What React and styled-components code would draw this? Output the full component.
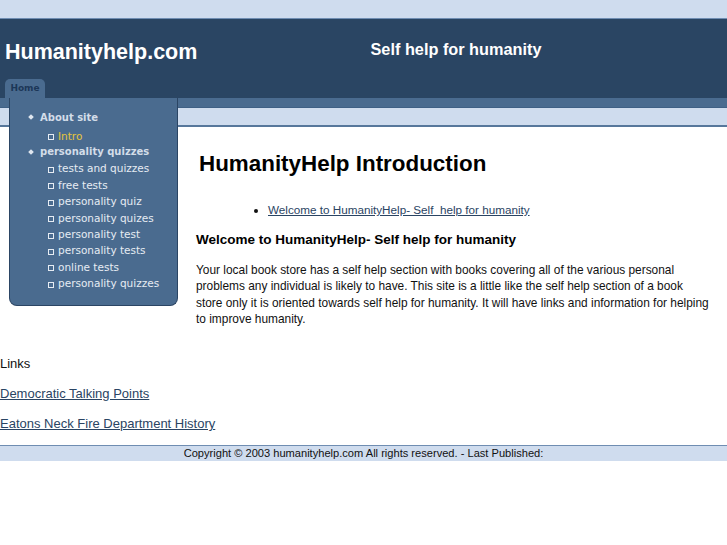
import React from "react";
import styled, { createGlobalStyle } from "styled-components";

const Global = createGlobalStyle`
  html, body { margin: 0; padding: 0; background: #fff; }
  body { font-family: "Liberation Sans", Arial, sans-serif; color: #111; }
  * { box-sizing: border-box; }
`;

const TopBand = styled.div`
  height: 19px;
  background: #cfdcee;
  border-bottom: 1px solid #6f8db2;
`;

const Header = styled.header`
  background: #2a4563;
  height: 79px;
  display: flex;
  flex-direction: column;
`;

const TitleRow = styled.div`
  display: grid;
  grid-template-columns: 365px 1fr;
  height: 60px;
`;

const SiteTitle = styled.div`
  font-size: 21.5px;
  line-height: 1;
  font-weight: bold;
  color: #fff;
  padding: 22.5px 0 0 5px;
`;

const Tagline = styled.div`
  font-size: 16.3px;
  line-height: 1;
  font-weight: bold;
  color: #fff;
  padding: 21.5px 0 0 5.5px;
`;

const TabRow = styled.nav`
  display: flex;
  padding-left: 5px;
  height: 19px;
`;

const Tab = styled.a`
  width: 40px;
  height: 19px;
  background: #4a6b8f;
  border-radius: 5px 5px 0 0;
  color: #1c3758;
  font-family: "DejaVu Sans", Verdana, sans-serif;
  font-weight: bold;
  font-size: 9px;
  line-height: 19px;
  text-align: center;
  text-decoration: none;
`;

const NavStrip = styled.div`
  height: 9px;
  background: #4a6b8f;
`;

const SubBand = styled.div`
  height: 20px;
  background: #cfdcee;
  border-top: 1px solid #3f6085;
  border-bottom: 2px solid #57779b;
`;

const MainRow = styled.div`
  display: flex;
  align-items: flex-start;
`;

const Sidebar = styled.aside`
  position: relative;
  z-index: 1;
  margin: -29px 0 0 9px;
  width: 169px;
  flex: none;
  background: #4a6b8f;
  border: 1px solid #2b4564;
  border-top: none;
  border-radius: 0 0 8px 8px;
  padding: 11.5px 0 13px 0;
  font-family: "DejaVu Sans", Verdana, sans-serif;
`;

const Menu = styled.ul`
  list-style: none;
  margin: 0;
  padding: ${(p) => p.$top || 0}px 0 0 ${(p) => p.$indent}px;
`;

const TopItem = styled.li`
  position: relative;
  font-size: 10px;
  font-weight: bold;
  line-height: 16.4px;
  color: #d3dde9;
  &::before {
    content: "";
    position: absolute;
    left: -11px;
    top: 5.7px;
    width: 4px;
    height: 4px;
    background: #dfe6ef;
    transform: rotate(45deg);
  }
`;

const SubItem = styled.li`
  position: relative;
  font-size: 10.5px;
  font-weight: normal;
  line-height: 16.4px;
  color: ${(p) => (p.$active ? "#e6c53c" : "#e6ecf3")};
  &::before {
    content: "";
    position: absolute;
    left: -10px;
    top: 6.6px;
    width: 4px;
    height: 4px;
    border: 1px solid #e6ecf3;
  }
`;

const Content = styled.main`
  margin-left: 18px;
  flex: 1;
`;

const Title = styled.h1`
  margin: 24px 0 0 0;
  padding-left: 3px;
  font-size: 22.4px;
  line-height: 26px;
  font-weight: bold;
  color: #000;
`;

const TocList = styled.ul`
  margin: 25px 0 0 0;
  padding-left: 72px;
  list-style: disc;
  font-size: 11.7px;
  line-height: 16px;
`;

const PageLink = styled.a`
  color: #2a4463;
  text-decoration: underline;
`;

const SubTitle = styled.h3`
  margin: 13px 0 0 0;
  font-size: 13.5px;
  line-height: 17px;
  font-weight: bold;
  color: #000;
`;

const Para = styled.p`
  margin: 14px 0 0 0;
  font-size: 11.9px;
  line-height: 16.3px;
  color: #111;
  white-space: nowrap;
`;

const LinksSection = styled.section`
  padding-top: 29px;
  font-size: 13px;
  line-height: 15px;
`;

const LinkLine = styled.div`
  margin-top: ${(p) => p.$gap}px;
`;

const Footer = styled.footer`
  margin-top: 13.5px;
  border-top: 1px solid #6f8db2;
  background: #cfdcee;
  height: 16px;
  font-size: 11.1px;
  line-height: 15px;
  text-align: center;
  color: #111;
`;

const subs = [
  "tests and quizzes",
  "free tests",
  "personality quiz",
  "personality quizes",
  "personality test",
  "personality tests",
  "online tests",
  "personality quizzes",
];

export default function App() {
  return (
    <>
      <Global />
      <TopBand />
      <Header>
        <TitleRow>
          <SiteTitle>Humanityhelp.com</SiteTitle>
          <Tagline>Self help for humanity</Tagline>
        </TitleRow>
        <TabRow>
          <Tab href="#">Home</Tab>
        </TabRow>
      </Header>
      <NavStrip />
      <SubBand />
      <MainRow>
        <Sidebar>
          <Menu $indent={30}>
            <TopItem>
              About site
              <Menu $indent={18} $top={1.6}>
                <SubItem $active>Intro</SubItem>
              </Menu>
            </TopItem>
            <TopItem>
              personality quizzes
              <Menu $indent={18}>
                {subs.map((s, i) => (
                  <SubItem key={i}>{s}</SubItem>
                ))}
              </Menu>
            </TopItem>
          </Menu>
        </Sidebar>
        <Content>
          <Title>HumanityHelp Introduction</Title>
          <TocList>
            <li>
              <PageLink href="#">Welcome to HumanityHelp- Self&nbsp; help for humanity</PageLink>
            </li>
          </TocList>
          <SubTitle>Welcome to HumanityHelp- Self help for humanity</SubTitle>
          <Para>
            Your local book store has a self help section with books covering all of the various personal
            <br />
            problems any individual is likely to have. This site is a little like the self help section of a book
            <br />
            store only it is oriented towards self help for humanity. It will have links and information for helping
            <br />
            to improve humanity.
          </Para>
        </Content>
      </MainRow>
      <LinksSection>
        <div>Links</div>
        <LinkLine $gap={15}>
          <PageLink href="#">Democratic Talking Points</PageLink>
        </LinkLine>
        <LinkLine $gap={15}>
          <PageLink href="#">Eatons Neck Fire Department History</PageLink>
        </LinkLine>
      </LinksSection>
      <Footer>Copyright © 2003 humanityhelp.com All rights reserved. - Last Published:</Footer>
    </>
  );
}
